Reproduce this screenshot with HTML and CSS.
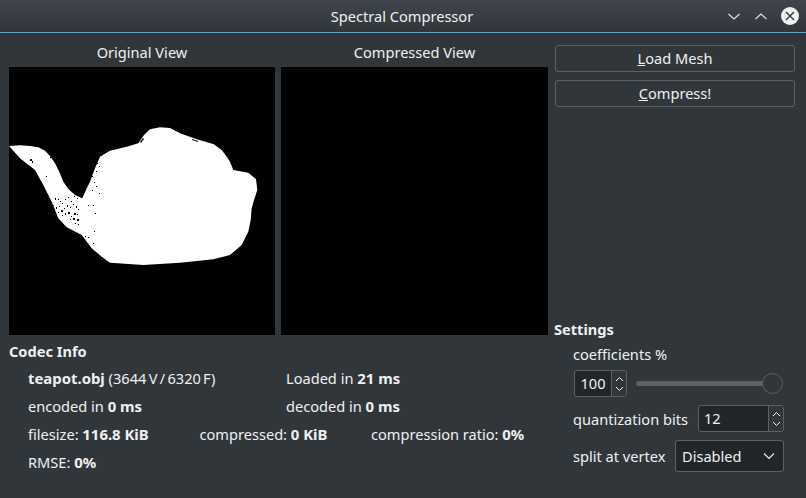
FILE: index.html
```html
<!DOCTYPE html>
<html lang="en">
  <head>
    <meta charset="UTF-8" />
    <title>Spectral Compressor</title>
    <link rel="stylesheet" href="styles.css">
  </head>
  <body>
    <div id="titlebar">
      <div class="title">Spectral Compressor</div>
      <div class="win-buttons">
        <svg width="14" height="14" viewBox="0 0 14 14"><path d="M1.5 5 7 10 12.500 5" fill="none" stroke="#e4e6e8" stroke-width="1.1"/></svg>
        <svg width="14" height="14" viewBox="0 0 14 14"><path d="M1.500 10 7 5 12.500 10" fill="none" stroke="#e4e6e8" stroke-width="1.1"/></svg>
        <svg width="18" height="18" viewBox="0 0 18 18"><circle cx="9" cy="9" r="9" fill="#eff0f1"/><path d="M5 5 13 13M13 5 5 13" stroke="#31363b" stroke-width="1.4"/></svg>
      </div>
    </div>

    <div id="content">
      <div id="left">
        <div id="views">
          <div class="view">
            <div class="view-label">Original View</div>
            <div class="canvas">
              <svg width="266" height="268" viewBox="9 67 266 268">
                <path fill="#fff" d="M9 146 20 145.300 30 146 38.300 147.300 45 150.700 50 156 55 163.300 59.300 171.700 63.300 181.700 68.300 189 75 195 82.300 198.300 86 190 90 181.700 95 168.300 100 156.700 110 150.700 126.700 146.700 138.300 143.300 144 135 150 129.300 160 127.300 170 128 180 133.300 196.700 139.300 213.300 144 221.700 150 226.700 156.700 230 161.700 233.300 170 248.300 172.700 256 179.300 257.300 190 254 200 251.700 208.300 250.700 220 248.300 231.700 241.700 245 230 255 213.300 259.300 180 262.700 143.300 265 110 262.700 101.700 256.700 91.700 248.300 81.700 235 66.700 227.300 58.300 218.300 51.700 201.700 43.300 185 35 170 20 158.300 Z"/>
                <path fill="#000" d="M30 159h2v2h-2zM32 161h1v2h-1zM50 157h1v1h-1zM46 176h1v1h-1zM55 198h1v2h-1zM58 199h1v1h-1zM60 201h1v1h-1zM53 205h1v1h-1zM56 207h1v2h-1zM59 206h1v1h-1zM62 203h1v1h-1zM65 199h1v1h-1zM68 197h1v1h-1zM71 201h1v1h-1zM74 196h1v1h-1zM77 198h1v1h-1zM54 209h1v1h-1zM58 212h1v1h-1zM61 210h2v2h-2zM64 208h1v1h-1zM67 205h1v2h-1zM70 207h1v1h-1zM73 204h1v1h-1zM76 206h1v2h-1zM78 209h1v1h-1zM62 215h1v1h-1zM65 213h1v2h-1zM68 212h2v2h-2zM71 216h1v1h-1zM74 213h2v2h-2zM77 214h1v1h-1zM70 219h1v1h-1zM73 218h2v2h-2zM77 219h2v2h-2zM75 223h1v1h-1zM78 224h1v1h-1zM85 236h1v1h-1zM88 237h1v1h-1zM94 231h1v1h-1zM93 243h1v1h-1zM95 213h1v1h-1zM93 205h1v1h-1zM88 205h1v1h-1zM92 176h1v1h-1zM94 182h1v1h-1zM96 171h1v1h-1zM99 166h1v1h-1zM93 168h1v1h-1zM97 163h1v1h-1zM96 186h1v1h-1zM92 190h1v1h-1zM99 193h1v1h-1zM140 142l3-4 1 1-3 4zM192 139l6 2v1l-6-2z"/>
              </svg>
            </div>
          </div>
          <div class="view">
            <div class="view-label">Compressed View</div>
            <div class="canvas"></div>
          </div>
        </div>

        <h3>Codec Info</h3>
        <div class="info">
          <div class="info-row">
            <span class="cell-wide"><b>teapot.obj</b> <span class="counts">(3644 V / 6320 F)</span></span>
            <span>Loaded in <b>21 ms</b></span>
          </div>
          <div class="info-row">
            <span class="cell-wide">encoded in <b>0 ms</b></span>
            <span>decoded in <b>0 ms</b></span>
          </div>
          <div class="info-row">
            <span class="cell-third">filesize: <b>116.8 KiB</b></span>
            <span class="cell-third">compressed: <b>0 KiB</b></span>
            <span>compression ratio: <b>0%</b></span>
          </div>
          <div class="info-row">
            <span>RMSE: <b>0%</b></span>
          </div>
        </div>
      </div>

      <div id="right">
        <button class="push"><u>L</u>oad Mesh</button>
        <button class="push"><u>C</u>ompress!</button>

        <div id="settings">
          <h3>Settings</h3>
          <div class="form">
            <div class="form-label">coefficients %</div>
            <div class="form-row slider-row">
              <div class="spin spin-small">
                <div class="spin-value">100</div>
                <div class="spin-arrows">
                  <svg width="9" height="6" viewBox="0 0 9 6"><path d="M1 5 4.500 1.500 8 5" fill="none" stroke="#eff0f1"/></svg>
                  <svg width="9" height="6" viewBox="0 0 9 6"><path d="M1 1 4.500 4.500 8 1" fill="none" stroke="#eff0f1"/></svg>
                </div>
              </div>
              <div class="slider"><div class="thumb"></div></div>
            </div>
            <div class="form-row">
              <span class="form-label">quantization bits</span>
              <div class="spin spin-wide">
                <div class="spin-value">12</div>
                <div class="spin-arrows">
                  <svg width="9" height="6" viewBox="0 0 9 6"><path d="M1 5 4.500 1.500 8 5" fill="none" stroke="#eff0f1"/></svg>
                  <svg width="9" height="6" viewBox="0 0 9 6"><path d="M1 1 4.500 4.500 8 1" fill="none" stroke="#eff0f1"/></svg>
                </div>
              </div>
            </div>
            <div class="form-row">
              <span class="form-label">split at vertex</span>
              <div class="combo">
                <span>Disabled</span>
                <svg width="12" height="8" viewBox="0 0 12 8"><path d="M1 1.500 6 6.500 11 1.500" fill="none" stroke="#eff0f1" stroke-width="1.1"/></svg>
              </div>
            </div>
          </div>
        </div>
      </div>
    </div>
  </body>
</html>
```

FILE: styles.css
```css
html,
body {
  margin: 0;
  height: 498px;
  overflow: hidden;
}

body {
  font-family: "Noto Sans", sans-serif;
  font-size: 14.6px;
  color: #eff0f1;
  background-color: #31363b;
  display: flex;
  flex-direction: column;
}

b {
  font-size: 14.9px;
}

#titlebar {
  height: 32px;
  flex: none;
  position: relative;
  display: flex;
  align-items: center;
  justify-content: center;
  background: linear-gradient(#40454d, #31363b);
  border-bottom: 1px solid #3daee9;
}

.title {
  margin-right: 2px;
}

.win-buttons {
  position: absolute;
  right: 7px;
  top: 7px;
  display: flex;
  align-items: center;
  gap: 13px;
}

#content {
  flex: 1;
  display: flex;
  padding: 0 11px 0 9px;
}

#left {
  width: 539px;
}

#views {
  display: flex;
  gap: 6px;
  padding-top: 10px;
}

.view-label {
  height: 24px;
  line-height: 18px;
  text-align: center;
}

.canvas {
  width: 266px;
  height: 268px;
  background-color: #000;
}

.view:last-child .canvas {
  width: 267px;
}

h3 {
  margin: 0;
  font-size: 14.6px;
  font-weight: bold;
}

#left h3 {
  margin-top: 7px;
  margin-bottom: 2px;
  line-height: 18px;
}

.info {
  padding: 2px 0 0 19px;
}

.info-row {
  display: flex;
  height: 28px;
  align-items: center;
}

.counts {
  word-spacing: -1.5px;
}

.cell-wide {
  width: 258px;
}

.cell-third {
  width: 171.5px;
}

#right {
  margin-left: 7px;
  width: 240px;
  display: flex;
  flex-direction: column;
  padding-top: 12px;
}

.push {
  height: 27px;
  margin-bottom: 8px;
  padding: 0 0 2px;
  font: inherit;
  color: inherit;
  background-color: #31363b;
  border: 1px solid #5d6165;
  border-radius: 3px;
}

#settings {
  margin-top: auto;
  padding-bottom: 26px;
}

#settings h3 {
  line-height: 18px;
  margin-left: -1px;
}

.form {
  padding-left: 18px;
}

.form > .form-label {
  line-height: 18px;
  margin-top: 7px;
}

.form-row {
  display: flex;
  align-items: center;
  justify-content: space-between;
  width: 211px;
  margin-top: 8px;
}

.slider-row {
  margin-top: 7px;
  margin-left: 1px;
  width: 209px;
}

.spin {
  display: flex;
  height: 27px;
  box-sizing: border-box;
  background-color: #232629;
  border: 1px solid #5d6165;
  border-radius: 3px;
}

.spin-small {
  width: 53px;
}

.spin-wide {
  width: 86px;
}

.spin-value {
  flex: 1;
  line-height: 25px;
  padding-left: 5px;
  border-right: 1px solid #5d6165;
}

.spin-small .spin-value {
  text-align: center;
  padding-left: 0;
}

.spin-arrows {
  width: 14px;
  display: flex;
  flex-direction: column;
  align-items: center;
  justify-content: center;
  gap: 4px;
  background-color: #31363b;
  border-radius: 0 3px 3px 0;
}

.slider {
  position: relative;
  width: 137px;
  height: 5px;
  margin-right: 10px;
  background-color: #5d6165;
  border-radius: 3px;
}

.thumb {
  position: absolute;
  right: -10px;
  top: -8px;
  width: 19px;
  height: 19px;
  background-color: #31363b;
  border: 1px solid #5d6165;
  border-radius: 50%;
}

.combo {
  width: 109px;
  height: 32px;
  box-sizing: border-box;
  display: flex;
  align-items: center;
  justify-content: space-between;
  padding: 0 8px 0 6px;
  background-color: #232629;
  border: 1px solid #5d6165;
  border-radius: 3px;
}
```
